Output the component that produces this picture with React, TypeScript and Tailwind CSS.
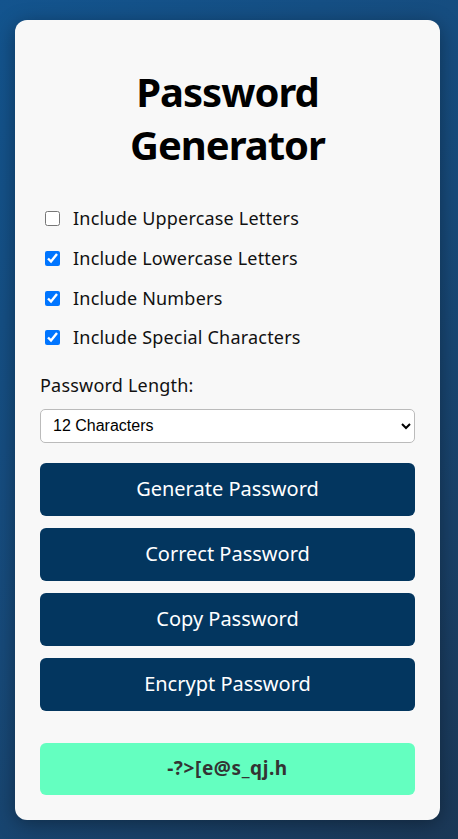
const options = [
  { label: "Include Uppercase Letters", checked: false },
  { label: "Include Lowercase Letters", checked: true },
  { label: "Include Numbers", checked: true },
  { label: "Include Special Characters", checked: true },
];

const actions = ["Generate Password", "Correct Password", "Copy Password", "Encrypt Password"];

export default function App() {
  return (
    <div
      className="min-h-[839px] w-full pt-5 pb-5 pl-[15px] bg-[linear-gradient(135deg,#13548e_0%,#174a7a_50%,#1b3857_100%)]"
      style={{ fontFamily: '"Noto Sans", "Open Sans", sans-serif' }}
    >
      <div className="w-[425px] bg-[#f8f8f8] rounded-xl px-[25px] pt-[45px] pb-[25px] shadow-[0_4px_20px_rgba(0,0,0,0.35)]">
        <h1 className="text-center font-bold text-[40px] leading-[53px] text-black tracking-[-1px]">
          Password
          <br />
          Generator
        </h1>

        <div className="mt-[28px] flex flex-col">
          {options.map((o) => (
            <label key={o.label} className="h-[39.67px] flex items-center text-[18px] text-[#111]">
              <input
                type="checkbox"
                defaultChecked={o.checked}
                className="ml-[5px] mr-[13px] w-[15px] h-[15px] accent-[#0075ff]"
              />
              <span className="tracking-[0.2px]">{o.label}</span>
            </label>
          ))}
        </div>

        <div className="mt-[15px] h-6 leading-6 text-[18px] text-[#111] tracking-[0.2px]">Password Length:</div>

        <select
          defaultValue="12"
          className="mt-3 w-full h-[34px] bg-white border border-[#bbb] rounded-[5px] pl-2 pr-1 text-[16px] text-black"
          style={{ fontFamily: '"Liberation Sans", Arial, sans-serif' }}
        >
          <option value="8">8 Characters</option>
          <option value="12">12 Characters</option>
          <option value="16">16 Characters</option>
        </select>

        <div className="mt-5 flex flex-col gap-3">
          {actions.map((a) => (
            <button
              key={a}
              className="h-[53px] w-full rounded-md bg-[#03365f] text-white text-[20px]"
            >
              {a}
            </button>
          ))}
        </div>

        <div className="mt-8 h-[52px] rounded-md bg-[#64ffc0] flex items-center justify-center font-bold text-[19px] tracking-[0.6px] text-[#333]">
          -?&gt;[e@s_qj.h
        </div>
      </div>
    </div>
  );
}
